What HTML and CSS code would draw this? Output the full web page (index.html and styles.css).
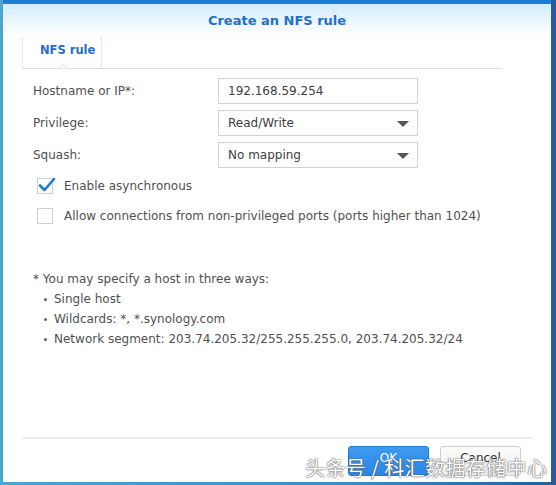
FILE: index.html
```html
<!DOCTYPE html>
<html>
<head>
<meta charset="utf-8">
<link rel="stylesheet" href="styles.css">
</head>
<body>
<div class="dialog">
  <div class="header">Create an NFS rule</div>
  <div class="tabbar">
    <div class="tab">NFS rule<span class="notch"></span></div>
  </div>
  <div class="form">
    <div class="row">
      <div class="label">Hostname or IP*:</div>
      <div class="field">192.168.59.254</div>
    </div>
    <div class="row">
      <div class="label">Privilege:</div>
      <div class="field select">Read/Write<span class="arrow"></span></div>
    </div>
    <div class="row">
      <div class="label">Squash:</div>
      <div class="field select">No mapping<span class="arrow"></span></div>
    </div>
    <div class="checks">
      <div class="check">
        <span class="box"><svg width="18" height="16" viewBox="0 0 18 16"><path d="M2 8.5 L6.5 13 L16 2" fill="none" stroke="#1f7ad6" stroke-width="2.6" stroke-linecap="round" stroke-linejoin="round"/></svg></span>
        <span>Enable asynchronous</span>
      </div>
      <div class="check">
        <span class="box"></span>
        <span>Allow connections from non-privileged ports (ports higher than 1024)</span>
      </div>
    </div>
  </div>
  <div class="note">
    <div>* You may specify a host in three ways:</div>
    <ul>
      <li>Single host</li>
      <li>Wildcards: *, *.synology.com</li>
      <li>Network segment: 203.74.205.32/255.255.255.0, 203.74.205.32/24</li>
    </ul>
  </div>
  <div class="footer">
    <div class="btn ok">OK</div>
    <div class="btn cancel">Cancel</div>
  </div>
  <div class="watermark">头条号 / 科汇数据存储中心</div>
</div>
</body>
</html>
```
FILE: styles.css
```css
html, body {
  margin: 0;
  padding: 0;
}
body {
  width: 556px;
  height: 485px;
  overflow: hidden;
  background: linear-gradient(90deg, #4aa6cc 0%, #3e8fc4 60%, #2a5c9c 100%);
  font-family: "DejaVu Sans", Verdana, sans-serif;
  font-size: 12px;
  color: #505050;
}
.dialog {
  position: relative;
  margin-left: 3px;
  width: 548px;
  height: 478px;
  background: #fff;
  border-top: 4px solid #1b7fd6;
  box-sizing: content-box;
}
.header {
  height: 32px;
  line-height: 34px;
  text-align: center;
  font-weight: bold;
  font-size: 13px;
  color: #1f6fc6;
  background: linear-gradient(180deg, #d3ebfb 0%, #ffffff 100%);
}
.tabbar {
  margin: 0 49px 0 19px;
  height: 32px;
  border-bottom: 1px solid #dcdcdc;
  display: flex;
}
.tab {
  position: relative;
  border-left: 1px solid #ececec;
  border-right: 1px solid #ececec;
  padding-left: 17px;
  box-sizing: border-box;
  width: 80px;
  line-height: 28px;
  font-weight: bold;
  font-size: 11.5px;
  color: #1f6fc6;
}
.notch {
  position: absolute;
  left: 37px;
  bottom: -1px;
  width: 6px;
  height: 6px;
  background: #fff;
  border-left: 1px solid #dcdcdc;
  border-top: 1px solid #dcdcdc;
  transform: translateY(3px) rotate(45deg);
  clip-path: polygon(0 0, 100% 0, 0 100%);
}
.form {
  padding: 9px 0 0 30px;
}
.row {
  display: flex;
  align-items: center;
  height: 26px;
  margin-bottom: 6px;
}
.label {
  width: 185px;
}
.field {
  position: relative;
  height: 24px;
  line-height: 24px;
  border: 1px solid #d2d2d2;
  padding-left: 9px;
  box-sizing: content-box;
  width: 189px;
  color: #404040;
}
.arrow {
  position: absolute;
  right: 8px;
  top: 10px;
  width: 0;
  height: 0;
  border-left: 6px solid transparent;
  border-right: 6px solid transparent;
  border-top: 6px solid #555;
}
.checks {
  margin-top: -3px;
}
.check {
  display: flex;
  align-items: center;
  height: 30px;
  margin-left: 4px;
}
.box {
  position: relative;
  width: 16px;
  height: 16px;
  border: 1px solid #d0d0d0;
  box-sizing: border-box;
  margin-right: 11px;
  background: #fff;
}
.box svg {
  position: absolute;
  left: 0;
  top: -2px;
}
.note {
  padding: 38px 0 0 30px;
  line-height: 20px;
}
.note ul {
  margin: 0;
  padding: 0 0 0 21px;
  list-style: none;
}
.note li {
  position: relative;
}
.note li::before {
  content: "";
  position: absolute;
  left: -10px;
  top: 9px;
  width: 3px;
  height: 3px;
  border-radius: 50%;
  background: #666;
}
.footer {
  position: absolute;
  left: 19px;
  right: 19px;
  top: 433px;
  border-top: 2px solid #ececec;
  display: flex;
  justify-content: flex-end;
  gap: 11px;
  padding: 7px 11px 0 0;
}
.btn {
  width: 81px;
  height: 30px;
  line-height: 22px;
  text-align: center;
  box-sizing: border-box;
  border-radius: 3px;
  font-size: 12px;
}
.ok {
  background: linear-gradient(180deg, #3d9bf0 0%, #2a86e3 100%);
  border: 1px solid #2378d0;
  color: #fff;
}
.cancel {
  background: linear-gradient(180deg, #fbfbfb 0%, #eeeeee 100%);
  border: 1px solid #cfcfcf;
  color: #333;
}
.watermark {
  position: absolute;
  left: 302px;
  top: 451px;
  font-family: "Noto Sans CJK SC", sans-serif;
  font-size: 20px;
  line-height: 26px;
  color: #fff;
  letter-spacing: 0.4px;
  text-shadow: 0 0 1px #444, 0 0 2px #666;
  white-space: nowrap;
}
```
